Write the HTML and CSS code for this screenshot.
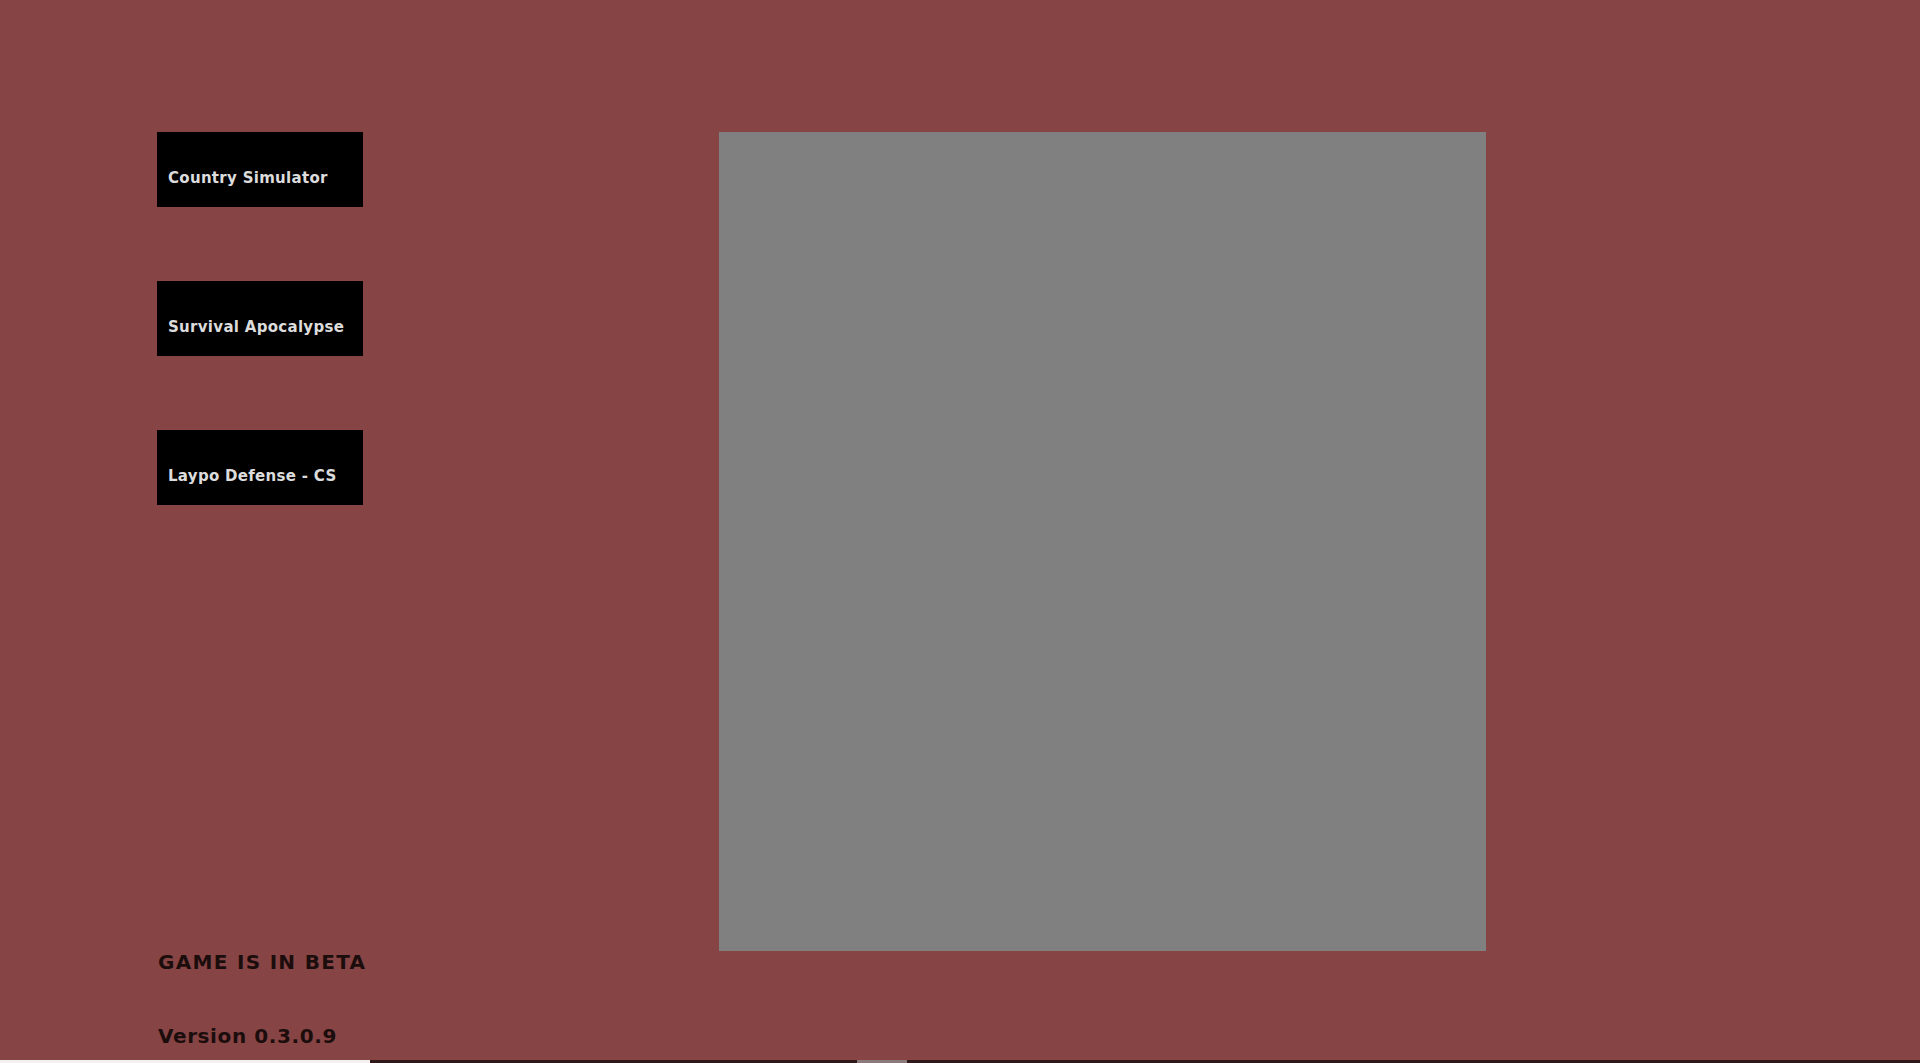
FILE: index.html
```html
<!DOCTYPE html>
<html>
<head>
<meta charset="utf-8">
<link rel="stylesheet" href="styles.css">
</head>
<body>
<div class="page">
  <div class="sidebar">
    <div class="menu">
      <div class="game-btn">Country Simulator</div>
      <div class="game-btn">Survival Apocalypse</div>
      <div class="game-btn">Laypo Defense - CS</div>
    </div>
    <div class="footer">
      <div class="footer-line footer-caps">GAME IS IN BETA</div>
      <div class="footer-line">Version 0.3.0.9</div>
    </div>
  </div>
  <div class="preview"></div>
</div>
<div class="bottom-bar">
  <div class="bar-fill"></div>
  <div class="bar-rest"><div class="bar-thumb"></div></div>
</div>
</body>
</html>
```
FILE: styles.css
```css
html, body {
  margin: 0;
  padding: 0;
  background: #864444;
  overflow: hidden;
}
.page {
  display: flex;
  height: 1060px;
}
.sidebar {
  width: 719px;
  flex-shrink: 0;
  padding-left: 157px;
  padding-top: 132px;
  padding-bottom: 12px;
  box-sizing: border-box;
  display: flex;
  flex-direction: column;
}
.menu {
  display: flex;
  flex-direction: column;
  gap: 74px;
}
.game-btn {
  width: 206px;
  height: 75px;
  box-sizing: border-box;
  background: #000;
  color: #dcdcdc;
  font-family: "DejaVu Sans", sans-serif;
  font-weight: bold;
  font-size: 15px;
  letter-spacing: 0.3px;
  line-height: 18px;
  padding-top: 37px;
  padding-left: 11px;
  white-space: nowrap;
}
.footer {
  margin-top: auto;
  display: flex;
  flex-direction: column;
  gap: 50px;
}
.footer-line {
  font-family: "DejaVu Sans", sans-serif;
  font-weight: bold;
  font-size: 20px;
  letter-spacing: 0.6px;
  line-height: 24px;
  color: #1c0d0d;
  padding-left: 1px;
  white-space: nowrap;
}
.footer-caps {
  letter-spacing: 1.3px;
}
.preview {
  width: 767px;
  height: 819px;
  margin-top: 132px;
  background: #808080;
}
.bottom-bar {
  display: flex;
  height: 3px;
}
.bar-fill {
  width: 370px;
  background: #f4f0f0;
}
.bar-rest {
  flex: 1;
  background: #301818;
  padding-left: 487px;
}
.bar-thumb {
  width: 50px;
  height: 3px;
  background: #8a7a7a;
}
```
